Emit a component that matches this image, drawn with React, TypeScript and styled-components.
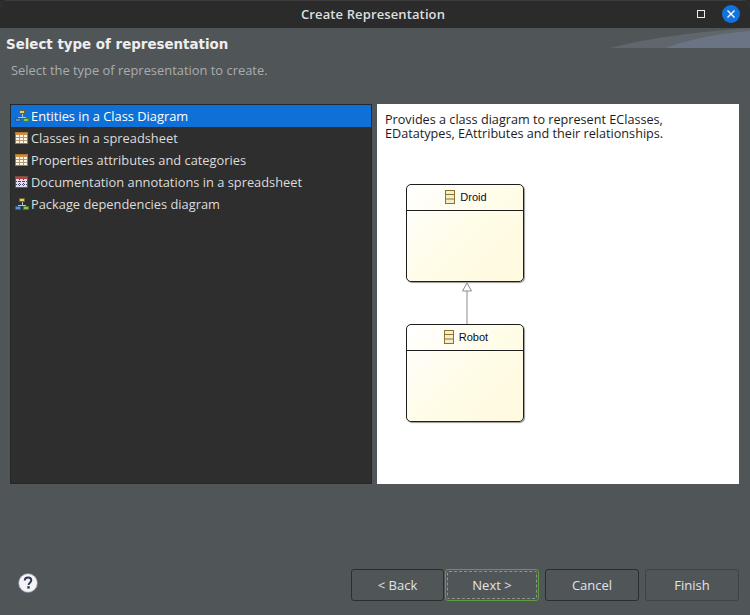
import React from 'react';
import styled, { createGlobalStyle } from 'styled-components';

const GlobalStyle = createGlobalStyle`
  html, body {
    margin: 0;
    padding: 0;
    width: 750px;
    height: 615px;
    overflow: hidden;
    background: #2b2b2b;
  }
  * {
    box-sizing: border-box;
  }
`;

const Dialog = styled.div`
  width: 750px;
  height: 615px;
  display: flex;
  flex-direction: column;
  background-color: #505558;
  border-radius: 8px 8px 0 0;
  overflow: hidden;
  font-family: 'Open Sans', 'Noto Sans', sans-serif;
  color: #eeeeee;
`;

const TitleBar = styled.div`
  position: relative;
  flex: 0 0 28px;
  display: flex;
  align-items: center;
  justify-content: center;
  padding: 0 4px 1px 0;
  background-color: #2b2b2b;
  border-top: 1px solid #3c3c3c;
  font-size: 13px;
  font-weight: 600;
  letter-spacing: 0.12px;
  color: #dfdfdf;
`;

const WindowControls = styled.div`
  position: absolute;
  right: 10px;
  top: 4px;
  display: flex;
  align-items: center;
  gap: 17px;
`;

const MaximizeIcon = styled.span`
  width: 8px;
  height: 8px;
  border: 1px solid #eeeeee;
`;

const CloseButton = styled.span`
  width: 18px;
  height: 18px;
  border-radius: 50%;
  background-color: #1273de;
  display: flex;
  align-items: center;
  justify-content: center;
`;

const Banner = styled.div`
  position: relative;
  flex: 0 0 76px;
  padding: 8px 0 0 6px;
`;

const BannerArt = styled.svg`
  position: absolute;
  top: 0;
  right: 0;
`;

const Heading = styled.div`
  font-family: 'DejaVu Sans', sans-serif;
  font-size: 13.4px;
  font-weight: 700;
  line-height: 18px;
  color: #eeeeee;
`;

const Subheading = styled.div`
  margin: 7px 0 0 5px;
  font-size: 12.9px;
  line-height: 18px;
  color: #a9adaf;
`;

const Panels = styled.div`
  flex: 0 0 380px;
  display: flex;
  gap: 5px;
  padding: 0 11px 0 10px;
`;

const TypeList = styled.ul`
  flex: 0 0 362px;
  margin: 0;
  padding: 0;
  list-style: none;
  background-color: #2e2e2e;
  border: 1px solid #25282a;
`;

const TypeRow = styled.li<{ $selected?: boolean }>`
  height: 22px;
  display: flex;
  align-items: center;
  gap: 2px;
  padding-left: 4px;
  font-size: 12.85px;
  color: ${({ $selected }) => ($selected ? '#ffffff' : '#dcdcdc')};
  background-color: ${({ $selected }) => ($selected ? '#0f70d7' : 'transparent')};
  white-space: nowrap;
`;

const Preview = styled.div`
  flex: 0 0 362px;
  background-color: #ffffff;
  padding: 8px 0 0 8px;
`;

const Description = styled.p`
  margin: 0;
  width: 340px;
  font-size: 12.65px;
  line-height: 14px;
  color: #1c1c1c;
`;

const Diagram = styled.div`
  margin: 44px 0 0 21px;
  width: 118px;
  display: flex;
  flex-direction: column;
  align-items: center;
`;

const ClassBox = styled.div`
  width: 118px;
  height: 98px;
  border: 1px solid #1e1e1e;
  border-radius: 5px;
  background: linear-gradient(135deg, #ffffff 0%, #fffce6 55%, #fffadf 100%);
  box-shadow: 1px 1px 1px #9a9a9a;
`;

const ClassHeader = styled.div`
  height: 26px;
  display: flex;
  align-items: center;
  justify-content: center;
  gap: 5px;
  padding: 0 0 2px 2px;
  border-bottom: 1px solid #1e1e1e;
  font-family: 'Liberation Sans', Arial, sans-serif;
  font-size: 11px;
  color: #0a0a2a;
`;

const Connector = styled.svg`
  display: block;
  margin-left: 3px;
`;

const Footer = styled.div`
  flex: 1;
  display: flex;
  align-items: flex-start;
  justify-content: space-between;
  padding: 85px 11px 0 18px;
`;

const HelpIcon = styled.svg`
  margin-top: 4px;
`;

const ButtonBar = styled.div`
  display: flex;
  gap: 6px;
`;

const WizardNav = styled.div`
  display: flex;
  gap: 1px;
`;

const DialogButton = styled.button<{ $focused?: boolean; $muted?: boolean; $width?: number }>`
  position: relative;
  width: ${({ $width }) => $width ?? 94}px;
  height: 32px;
  padding: 0;
  border-radius: 3px;
  border: 1px solid ${({ $focused, $muted }) => ($focused ? '#5f9e3e' : $muted ? '#3f4345' : '#2b2e30')};
  background-color: #505558;
  font-family: 'Open Sans', 'Noto Sans', sans-serif;
  font-size: 13px;
  color: #e2e4e5;

  ${({ $focused }) =>
    $focused
      ? `&::after {
          content: '';
          position: absolute;
          inset: 1px;
          border: 1px dashed #8f9395;
          border-radius: 2px;
        }`
      : ''}
`;

const HierarchyIcon = () => (
  <svg width="14" height="14" viewBox="0 0 14 14" shapeRendering="crispEdges">
    <rect x="4.5" y="1.5" width="5" height="3" fill="#e6cf6a" stroke="#6f6330" strokeWidth="1" />
    <path d="M7 5v3.5M3 8.5h8" fill="none" stroke="#b8c0c8" strokeWidth="1" />
    <rect x="0.5" y="9.5" width="5" height="3" fill="#5c8fd0" stroke="#2f5a8f" strokeWidth="1" />
    <rect x="8.5" y="9.5" width="5" height="3" fill="#84c84e" stroke="#3f7d2a" strokeWidth="1" />
  </svg>
);

const TableIcon = ({ annotated }: { annotated?: boolean }) => (
  <svg width="14" height="14" viewBox="0 0 14 14" shapeRendering="crispEdges">
    <rect x="0.5" y="1.5" width="12" height="11" fill={annotated ? '#e2deee' : '#fbf7e8'} stroke={annotated ? '#7b4a4a' : '#a87838'} />
    <rect x="1" y="2" width="11" height="2" fill={annotated ? '#b8443c' : '#d98a38'} />
    <path
      d="M1 6.5h11M1 9.5h11M4.5 4v8M8.5 4v8"
      stroke={annotated ? '#4a3f66' : '#b89a68'}
      strokeWidth="1"
      strokeDasharray={annotated ? '1 1' : undefined}
    />
  </svg>
);

const ClassIcon = () => (
  <svg width="10" height="14" viewBox="0 0 10 14">
    <rect x="0.5" y="0.5" width="9" height="13" fill="#f6eec8" stroke="#8a7434" />
    <path d="M1 4.5h8M1 9h8" stroke="#8a7434" />
  </svg>
);

const rows = [
  { label: 'Entities in a Class Diagram', icon: <HierarchyIcon />, selected: true },
  { label: 'Classes in a spreadsheet', icon: <TableIcon /> },
  { label: 'Properties attributes and categories', icon: <TableIcon /> },
  { label: 'Documentation annotations in a spreadsheet', icon: <TableIcon annotated /> },
  { label: 'Package dependencies diagram', icon: <HierarchyIcon /> },
];

export default function App() {
  return (
    <Dialog>
      <GlobalStyle />
      <TitleBar>
        Create Representation
        <WindowControls>
          <MaximizeIcon />
          <CloseButton>
            <svg width="10" height="10" viewBox="0 0 10 10">
              <path d="M1.5 1.5l7 7M8.5 1.5l-7 7" stroke="#ffffff" strokeWidth="1.4" />
            </svg>
          </CloseButton>
        </WindowControls>
      </TitleBar>
      <Banner>
        <BannerArt width="140" height="20" viewBox="0 0 140 20">
          <path d="M0 20C30 12 80 4 140 0V20Z" fill="#5f666c" />
          <path d="M56 20C75 12 105 6 140 3V20Z" fill="#6b7484" />
        </BannerArt>
        <Heading>Select type of representation</Heading>
        <Subheading>Select the type of representation to create.</Subheading>
      </Banner>
      <Panels>
        <TypeList>
          {rows.map((row) => (
            <TypeRow key={row.label} $selected={row.selected}>
              {row.icon}
              {row.label}
            </TypeRow>
          ))}
        </TypeList>
        <Preview>
          <Description>
            Provides a class diagram to represent EClasses, EDatatypes, EAttributes and their relationships.
          </Description>
          <Diagram>
            <ClassBox>
              <ClassHeader>
                <ClassIcon />
                Droid
              </ClassHeader>
            </ClassBox>
            <Connector width="12" height="42" viewBox="0 0 12 42">
              <path d="M6 9V42" stroke="#8c8c8c" strokeWidth="1" />
              <path d="M6 1L10.5 9H1.5Z" fill="#ffffff" stroke="#8c8c8c" strokeWidth="1" />
            </Connector>
            <ClassBox>
              <ClassHeader>
                <ClassIcon />
                Robot
              </ClassHeader>
            </ClassBox>
          </Diagram>
        </Preview>
      </Panels>
      <Footer>
        <HelpIcon width="20" height="20" viewBox="0 0 20 20">
          <circle cx="10" cy="10" r="9.5" fill="#f4f4f6" stroke="#6f7f9a" strokeWidth="0.8" />
          <path d="M6.8 7.6C6.8 5.6 8.3 4.5 10 4.5c1.9 0 3.3 1.1 3.3 2.8 0 2.4-2.7 2.3-2.7 4.6" fill="none" stroke="#2e3a52" strokeWidth="2" />
          <rect x="9.3" y="13.2" width="2.4" height="2.4" fill="#2e3a52" />
        </HelpIcon>
        <ButtonBar>
          <WizardNav>
            <DialogButton $width={93}>&lt; Back</DialogButton>
            <DialogButton $focused>Next &gt;</DialogButton>
          </WizardNav>
          <DialogButton>Cancel</DialogButton>
          <DialogButton $muted>Finish</DialogButton>
        </ButtonBar>
      </Footer>
    </Dialog>
  );
}
